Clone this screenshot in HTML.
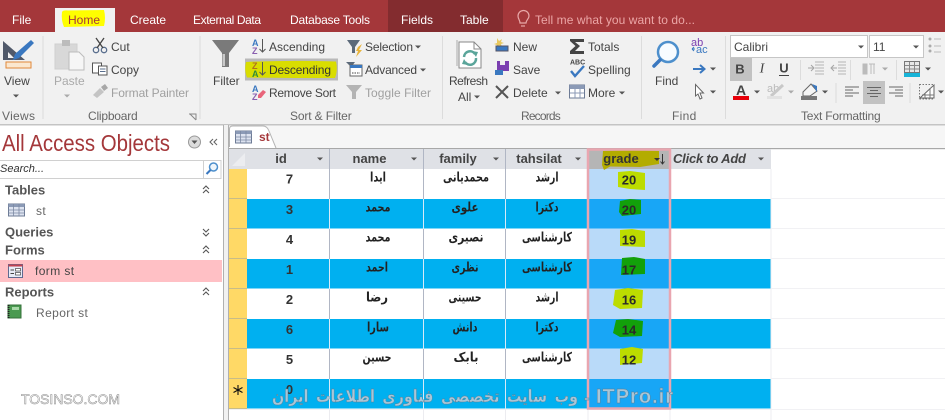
<!DOCTYPE html>
<html><head><meta charset="utf-8">
<style>
html,body{margin:0;padding:0;background:#fff;width:945px;height:420px;overflow:hidden}
svg{display:block}
text{font-family:"Liberation Sans",sans-serif;font-size:12px;fill:#444;dominant-baseline:central}
.tab{fill:#fff}
.g{fill:#aaa}
.h{font-weight:bold;font-size:13px;fill:#444}
.sec{font-weight:bold;font-size:13px;fill:#555}
.n{font-size:12px;fill:#666;letter-spacing:.4px}
.lbl{fill:#666;letter-spacing:.3px}
.d{font-weight:bold;font-size:13px;fill:#333;text-anchor:middle}
.fa{font-family:"DejaVu Sans",sans-serif;font-weight:bold;font-size:13px;fill:#222;text-anchor:middle}
.m{text-anchor:middle}
.num{font-weight:bold;font-size:13px;fill:#2a2a2a;text-anchor:middle}
</style></head><body>
<svg width="945" height="420" viewBox="0 0 945 420" xmlns="http://www.w3.org/2000/svg">
<defs>
<path id="car" d="M-3 -1.5H3L0 1.5Z" fill="#555"/>
<path id="carg" d="M-3 -1.5H3L0 1.5Z" fill="#aaa"/>
<g id="chu" fill="none" stroke="#555" stroke-width="1.1"><path d="M-3 -1L0 -4L3 -1M-3 3L0 0L3 3"/></g>
<g id="chd" fill="none" stroke="#555" stroke-width="1.1"><path d="M-3 -3L0 0L3 -3M-3 1L0 4L3 1"/></g>
<g id="tbl"><rect x="0" y="0" width="16" height="12" fill="#dde3f0" stroke="#6d7b95"/><rect x="0" y="0" width="16" height="3" fill="#8b9ab6"/><path d="M0 6H16M0 9H16M5 0V12M10.500 0V12" stroke="#7c89a3" stroke-width=".8"/></g>
</defs>

<!-- title bar -->
<rect width="945" height="32" fill="#a4373a"/>
<rect x="388" width="115" height="32" fill="#832c2f"/>
<rect x="55" y="8" width="60" height="24" fill="#f1f1f1"/>
<path d="M62 12Q63 10 68 10.500L104 10Q106 18 104 26L64 27Q61 20 62 12Z" fill="#ffff00"/>
<text class="tab" x="12" y="20">File</text>
<text x="68" y="20" style="fill:#a4373a">Home</text>
<text class="tab" x="130" y="20">Create</text>
<text class="tab" x="193" y="20" textLength="68">External Data</text>
<text class="tab" x="290" y="20" textLength="80">Database Tools</text>
<text class="tab" x="401" y="20">Fields</text>
<text class="tab" x="460" y="20">Table</text>
<g fill="none" stroke="#e8a8a8" stroke-width="1.200"><path d="M520 23C520 20 518 19 518 16A5 5 0 0 1 529 16C529 19 526 20 526 23Z"/><path d="M521 26H525"/></g>
<text x="535" y="20" textLength="160" style="fill:#eba6a6">Tell me what you want to do...</text>

<!-- ribbon -->
<rect y="32" width="945" height="92" fill="#f1f1f1"/>
<rect y="124" width="945" height="1.500" fill="#c4c4c4"/>
<g stroke="#dcdcdc"><path d="M43 36V119M200 36V119M442.500 36V119M641.500 36V119M725.500 36V119"/></g>

<!-- views -->
<path d="M3 41L25 60H3Z" fill="#50596a"/><path d="M8 52L14 58H8Z" fill="#f1f1f1"/>
<path d="M31 40L34 43L19 58L13 60L15 54Z" fill="#3a78c0"/>
<rect x="6" y="62" width="25" height="6" fill="#fbe7cf" stroke="#e0883a"/>
<text x="4" y="81">View</text><use href="#car" x="16" y="96"/>
<text class="lbl" x="2" y="116">Views</text>

<!-- clipboard -->
<rect x="55" y="44" width="22" height="25" fill="#d8d8d8" stroke="#cfcfcf"/><rect x="62" y="40" width="8" height="6" fill="#bcbcbc"/>
<path d="M69 52H79L84 57V70H69Z" fill="#f6f6f6" stroke="#bcbcbc"/>
<text class="g" x="54" y="81" style="fill:#aaa">Paste</text><use href="#carg" x="67" y="96"/>
<g fill="none" stroke="#5a6f8e" stroke-width="1.300"><circle cx="96" cy="50" r="2.700"/><circle cx="104" cy="50" r="2.700"/><path d="M97 48L104 38M103 48L96 38" stroke="#444"/></g>
<text x="111" y="47">Cut</text>
<g fill="#fff" stroke="#555"><rect x="92.500" y="63" width="9" height="10"/><path d="M98.500 66H107V75H98.500Z"/><path d="M100 69H105.500M100 71.500H105.500" stroke="#5a6f8e"/></g>
<text x="111" y="70">Copy</text>
<path d="M93 95L100 88L104 92L97 98Z" fill="#c4c4c4"/><path d="M101 87L105 84L108 88L104 91Z" fill="#a8a8a8"/>
<text x="111" y="93" textLength="78" style="fill:#a0a0a0">Format Painter</text>
<text class="lbl" x="88" y="116" textLength="50">Clipboard</text>
<path d="M189 114H196V120M190 114L196 120" fill="none" stroke="#888"/>

<!-- sort and filter -->
<path d="M212 40H239L229 53V67H222V53Z" fill="#7a7a7a"/><path d="M225 54V66H222.500V54Z" fill="#c9c9c9"/>
<text x="213" y="81">Filter</text>
<rect x="245" y="58.500" width="93" height="22" fill="#b9b9b9"/>
<path d="M246 62Q290 60 336 61.500Q338 70 335 78Q290 78 247 77.500Q244 70 246 62Z" fill="#d9dd00"/>
<g style="font-size:9px;font-weight:bold">
<text x="252" y="43" style="font-size:9px;font-weight:bold;fill:#3a78c0">A</text><text x="252" y="51" style="font-size:9px;font-weight:bold;fill:#8a5fb0">Z</text>
<text x="252" y="66" style="font-size:9px;font-weight:bold;fill:#b07020">Z</text><text x="252" y="74" style="font-size:9px;font-weight:bold;fill:#2f8a3c">A</text>
<text x="252" y="89" style="font-size:9px;font-weight:bold;fill:#3a78c0">A</text><text x="252" y="97" style="font-size:9px;font-weight:bold;fill:#8a5fb0">Z</text>
</g>
<g fill="none" stroke="#555"><path d="M262.500 39V52M259.500 49L262.500 52L265.500 49M262.500 62V75M259.500 72L262.500 75L265.500 72"/></g>
<path d="M258 95L263 90L266 92L261 98H258Z" fill="#e8647a"/>
<text x="269" y="47" textLength="56">Ascending</text>
<text x="269" y="70" textLength="62" style="fill:#333">Descending</text>
<text x="269" y="93" textLength="67">Remove Sort</text>
<path d="M347 40H360L355 47V53H352V47Z" fill="#5c6a7a"/><path d="M358 47L362 44L359 50H362L356 57L358 51H356Z" fill="#e8b43c"/>
<text x="365" y="47" textLength="48">Selection</text><use href="#car" x="418" y="47"/>
<path d="M346 62H355L352 66V70H350V66Z" fill="#5c6a7a"/><rect x="350" y="65" width="12" height="11" fill="#fff" stroke="#666"/><rect x="350" y="65" width="12" height="3" fill="#3a78c0"/><path d="M352 73H360" stroke="#444" stroke-dasharray="1.500 1"/>
<text x="365" y="70" textLength="52">Advanced</text><use href="#car" x="423" y="70"/>
<path d="M346 85H362L356 92V99H352V92Z" fill="#b4b4b4"/>
<text x="365" y="93" textLength="66" style="fill:#a0a0a0">Toggle Filter</text>
<text class="lbl" x="290" y="116" textLength="62">Sort &amp; Filter</text>

<!-- records -->
<path d="M459 42H474L481 49V68H459Z" fill="#fff" stroke="#888"/><path d="M457 40V66" stroke="#aaa"/><path d="M474 42V49H481" fill="none" stroke="#888"/>
<g fill="none" stroke="#5aa59a" stroke-width="2.500"><path d="M464 57A6 6 0 0 1 475 54"/><path d="M476 58A6 6 0 0 1 465 62"/></g>
<path d="M472 51L478 52L476 57Z M468 65L462 64L464 59Z" fill="#5aa59a"/>
<text x="449" y="81" textLength="39">Refresh</text>
<text x="458" y="97">All</text><use href="#car" x="477" y="97"/>
<path d="M497 38L499 41L502 39L501 42L504 43L501 44L502 47L499 45L497 48L497 45L494 44L497 43Z" fill="#e8c860"/>
<rect x="496" y="46" width="12" height="5" fill="#3a78c0" stroke="#556"/>
<text x="513" y="47">New</text>
<rect x="497" y="61" width="12" height="10" fill="#7a3fb0"/><rect x="500" y="61" width="5" height="4" fill="#eee"/><path d="M495 70H503V75H495Z" fill="#3a78c0"/>
<text x="513" y="70">Save</text>
<path d="M496 86L508 98M508 86L496 98" stroke="#555" stroke-width="2"/>
<text x="513" y="93">Delete</text><use href="#car" x="558" y="93"/>
<path d="M570 39H584V42H575L580 46L575 51H584V54H570V51L575.500 46L570 41Z" fill="#444"/>
<text x="588" y="47">Totals</text>
<text x="570" y="63" style="font-size:7px;font-weight:bold;fill:#444">ABC</text>
<path d="M571 71L575 76L584 66" fill="none" stroke="#3a78c0" stroke-width="2.400"/>
<text x="588" y="70">Spelling</text>
<rect x="569.500" y="85" width="15" height="13" fill="#fff" stroke="#6d7b95"/><rect x="569.500" y="85" width="15" height="4" fill="#8b9ab6"/><path d="M570 93H584M575 89V98M580 89V98" stroke="#8b9ab6"/>
<text x="588" y="93">More</text><use href="#car" x="622" y="93"/>
<text class="lbl" x="521" y="116" textLength="40">Records</text>

<!-- find -->
<circle cx="668" cy="52" r="10" fill="#f7fbff" stroke="#4d8fcc" stroke-width="2.500"/><path d="M660 60L654 66" stroke="#3a78c0" stroke-width="3.500" stroke-linecap="round"/>
<text x="655" y="81">Find</text>
<text x="691" y="43" style="font-size:11px;fill:#7a3fb0">ab</text>
<text x="696" y="50" style="font-size:11px;fill:#3a78c0">ac</text>
<path d="M692 49H695M692 49L694 47M692 49L694 51" stroke="#3a78c0" fill="none"/>
<path d="M693 69H704M700 65L704.500 69L700 73" fill="none" stroke="#3a78c0" stroke-width="2"/><use href="#car" x="713" y="69"/>
<path d="M695.500 84.500V96L698 94L700 99L702 98L700 93H703.500Z" fill="#fff" stroke="#666"/><use href="#car" x="713" y="92"/>
<text class="lbl" x="672" y="116">Find</text>

<!-- text formatting -->
<rect x="730.500" y="35.500" width="137" height="22" fill="#fff" stroke="#c6c6c6"/>
<rect x="869.500" y="35.500" width="54" height="22" fill="#fff" stroke="#c6c6c6"/>
<text x="734" y="47">Calibri</text><text x="873" y="47">11</text>
<use href="#car" x="861" y="47"/><use href="#car" x="916" y="47"/>
<g fill="#aaa"><circle cx="930" cy="39" r="1.500"/><circle cx="930" cy="46" r="1.500"/><circle cx="930" cy="51" r="1.500"/></g>
<path d="M934 39H941M934 46H941M934 52H941" stroke="#bbb"/>
<rect x="730" y="58" width="22" height="23" fill="#c2c2c2"/>
<text class="m" x="740" y="69" style="font-weight:bold;font-size:13px;text-anchor:middle">B</text>
<text class="m" x="762" y="69" style="font-style:italic;font-family:'Liberation Serif',serif;font-size:14px;text-anchor:middle">I</text>
<text class="m" x="784" y="68" style="font-weight:bold;font-size:13px;text-anchor:middle">U</text><path d="M779 75.500H789" stroke="#444"/>
<g stroke="#dcdcdc"><path d="M800.500 60V80M850.500 60V80M896.500 60V80M836 83V103M910 83V103"/></g>
<g stroke="#b5b5b5" fill="none"><path d="M815 62H824M815 65H824M815 68H824M815 71H824M815 74H824M838 62H846M838 65H846M838 68H846M838 71H846M838 74H846"/><path d="M808 68H814M811 65L814 68L811 71M837 68H831M834 65L831 68L834 71" stroke="#a5a5a5"/></g>
<path d="M863 64H867V74H863ZM869 64H875M871 64V74M874 64V74" fill="#bbb" stroke="#bbb"/><use href="#carg" x="885" y="69"/>
<rect x="904.500" y="61.500" width="15" height="11" fill="#e8e8e8" stroke="#777"/><path d="M905 65.500H919M905 69H919M909.500 62V72M914.500 62V72" stroke="#888"/>
<rect x="904" y="73" width="16" height="4" fill="#18b4d8"/><use href="#car" x="928" y="69"/>
<text x="741" y="90" style="font-size:14px;font-weight:bold;text-anchor:middle;fill:#444">A</text>
<rect x="733" y="96" width="16" height="4" fill="#e8000a"/><use href="#car" x="757" y="92"/>
<text x="767" y="89" style="font-size:11px;fill:#bbb">ab</text><path d="M771 96L783 85" stroke="#c8c8c8" stroke-width="3"/><rect x="767" y="96" width="15" height="3" fill="#e2e2e2"/><use href="#carg" x="791" y="92"/>
<path d="M803 92L811 84L817 91L810 96H803Z" fill="#f5f5f5" stroke="#666"/><path d="M812 84L817 86L817 92Z" fill="#3a78c0"/><rect x="801" y="96" width="16" height="4" fill="#777"/><use href="#car" x="825" y="92"/>
<rect x="863" y="81" width="22" height="23" fill="#c2c2c2"/>
<g stroke="#666"><path d="M845 87H859M845 90H853M845 93H859M845 96H853M867 87.500H881M870 90.500H878M867 93.500H881M870 96.500H878M889 87H903M895 90H903M889 93H903M895 96H903"/></g>
<path d="M919.500 84.500H934V99H919.500Z" fill="none" stroke="#777" stroke-dasharray="1.500 1.500"/><path d="M920 98L934 85V98Z" fill="#fff" stroke="#666"/><path d="M925 93V99M930 88V99M922 95H934" stroke="#777"/><use href="#car" x="941" y="92"/>
<text class="lbl" x="801" y="116" textLength="80">Text Formatting</text>

<!-- nav -->
<rect y="125.500" width="223" height="294.500" fill="#fff"/>
<text x="2" y="143" textLength="168" lengthAdjust="spacingAndGlyphs" style="font-size:23px;fill:#a4373a">All Access Objects</text>
<circle cx="194.500" cy="142" r="6" fill="#dcdcdc" stroke="#999"/><path d="M191.500 140.500H197.500L194.500 144Z" fill="#555"/>
<path d="M213 139L210 142L213 145M217 139L214 142L217 145" fill="none" stroke="#666" stroke-width="1.100"/>
<rect x="-1" y="160.500" width="222" height="18" fill="#fff" stroke="#d0d0d0"/>
<path d="M203.500 161V178" stroke="#d0d0d0"/>
<text x="0" y="169" style="font-size:11px;font-style:italic;fill:#333">Search...</text>
<circle cx="213.500" cy="167" r="4" fill="#eef5fb" stroke="#4d8fcc" stroke-width="1.500"/><path d="M210.500 170L206.500 174" stroke="#3a78c0" stroke-width="2"/>
<text class="sec" x="5" y="190">Tables</text><use href="#chu" x="206" y="190"/>
<use href="#tbl" x="8.500" y="204"/><text class="n" x="36" y="211">st</text>
<text class="sec" x="5" y="232">Queries</text><use href="#chd" x="206" y="232"/>
<text class="sec" x="5" y="250">Forms</text><use href="#chu" x="206" y="250"/>
<rect y="260" width="222" height="22" fill="#ffc0c5"/>
<rect x="8.500" y="264.500" width="14" height="13" fill="#e8ebf6" stroke="#606a90"/><path d="M8.500 265.500H22.500" stroke="#c04050" stroke-width="2"/><path d="M10.500 270H14M10.500 273.500H14" stroke="#444"/><rect x="15.500" y="268.500" width="5" height="2.500" fill="#fff" stroke="#444" stroke-width=".7"/><rect x="15.500" y="272.500" width="5" height="2.500" fill="#fff" stroke="#444" stroke-width=".7"/>
<text class="n" x="35" y="271" style="fill:#444">form st</text>
<text class="sec" x="5" y="292">Reports</text><use href="#chu" x="206" y="292"/>
<rect x="8" y="305" width="13" height="13" fill="#4a9a50" stroke="#34703a"/><path d="M8.500 305V318" stroke="#222" stroke-dasharray="1 1" stroke-width="2"/><rect x="12" y="307" width="7" height="3" fill="#a8d8a8"/>
<text class="n" x="36" y="313">Report st</text>
<text x="21" y="399" textLength="99" style="font-size:14px;fill:#fff;stroke:#888;stroke-width:.5px">TOSINSO.COM</text>

<!-- splitter -->
<rect x="223" y="125" width="6" height="295" fill="#f1f1f1"/>
<path d="M223.500 125V420M228.500 125V420" stroke="#b0b0b0"/>

<!-- tabs strip -->
<rect x="229" y="125.500" width="716" height="24" fill="#f6f6f6"/>
<path d="M229.500 149V129Q229.500 126 233 126H263Q267 126 269 131L276 148" fill="#fff" stroke="#b5b5b5"/>
<rect x="229" y="147" width="46" height="2" fill="#fff"/>
<use href="#tbl" x="235.500" y="131"/>
<text x="259" y="137" style="font-weight:bold;font-size:12px;fill:#a4373a">st</text>

<!-- table base -->
<rect x="229" y="149" width="716" height="271" fill="#fff"/>
<rect x="229" y="148" width="716" height="1.200" fill="#a8a8a8"/>
<rect x="229" y="149" width="542" height="20" fill="#dfe1e6"/>
<path d="M232 166L245 153V166Z" fill="#ecedf0"/>

<!-- selector -->
<rect x="229" y="169" width="18" height="240" fill="#ffd966"/>
<path d="M229 198.500H247M229 228.500H247M229 258.500H247M229 288.500H247M229 318.500H247M229 348.500H247M229 378.500H247M229 408.500H247" stroke="#c8bc88"/>

<!-- rows -->
<g fill="#00b0f0">
<rect x="247" y="199" width="524" height="29.500"/>
<rect x="247" y="259" width="524" height="29.500"/>
<rect x="247" y="319" width="524" height="29.500"/>
<rect x="247" y="379" width="524" height="29.500"/>
</g>
<path d="M771 169V420" stroke="#ececf0"/>
<g stroke="#f1f1f4"><path d="M771 198.500H945M771 228.500H945M771 258.500H945M771 288.500H945M771 318.500H945M771 348.500H945M771 378.500H945M229 409.500H945"/></g>
<g stroke="#b0b6c4"><path d="M329.500 149V199M423.500 149V199M505.500 149V199M329.500 229V259M423.500 229V259M505.500 229V259M329.500 289V319M423.500 289V319M505.500 289V319M329.500 349V379M423.500 349V379M505.500 349V379"/></g>
<g stroke="#d6eaf8"><path d="M329.500 199V229M423.500 199V229M505.500 199V229M329.500 259V289M423.500 259V289M505.500 259V289M329.500 319V349M423.500 319V349M505.500 319V349M329.500 379V409M423.500 379V409M505.500 379V409"/></g>
<path d="M329.500 409V420M423.500 409V420M505.500 409V420M588 409V420M670 409V420" stroke="#ececf0"/>

<!-- grade col -->
<rect x="589" y="169" width="81" height="240" fill="#b9daf9"/>
<g fill="#18a6f6">
<rect x="589" y="199" width="81" height="29.500"/><rect x="589" y="259" width="81" height="29.500"/><rect x="589" y="319" width="81" height="29.500"/><rect x="589" y="379" width="81" height="29.500"/>
</g>
<rect x="589" y="149" width="81" height="20" fill="#b5b5b5"/>
<path d="M603 151Q630 150 659 151L659 164L640 167L610 166.500L604 170L602 165Z" fill="#b3ac00"/>
<rect x="588" y="149.500" width="82" height="259" fill="none" stroke="#e9a6b0" stroke-width="2.500"/>
<g fill="#bcdc00">
<path d="M618 172L630 171L645 173L645 190L630 189L618 187Z"/>
<path d="M620 230L632 229L645 231L645 247L620 246Z"/>
<path d="M615 290L628 288L643 290L642 308L620 309L613 305Z"/>
<path d="M620 349L632 347L643 349L642 363L620 365Z"/>
</g>
<g fill="#12a00a">
<path d="M620 201L630 199L641 200L641 214L622 216L619 212Z"/>
<path d="M622 258L634 257L645 259L645 274L621 275Z"/>
<path d="M616 320L628 319L643 321L642 336L620 337L613 333Z"/>
</g>

<!-- header text -->
<text class="h m" x="281" y="158.500" style="text-anchor:middle">id</text>
<text class="h m" x="369.500" y="158.500" style="text-anchor:middle">name</text>
<text class="h m" x="458" y="158.500" style="text-anchor:middle">family</text>
<text class="h m" x="539" y="158.500" style="text-anchor:middle">tahsilat</text>
<text class="h m" x="621" y="158.500" style="text-anchor:middle;fill:#333">grade</text>
<text x="673" y="158.500" textLength="73" style="font-weight:bold;font-style:italic;font-size:13px;fill:#444">Click to Add</text>
<use href="#car" x="320" y="159"/><use href="#car" x="414" y="159"/><use href="#car" x="496" y="159"/><use href="#car" x="578" y="159"/><use href="#car" x="761" y="159"/>
<path d="M654 158H660L657 161Z" fill="#333"/><path d="M662.500 154V164M660.500 161.500L662.500 164L664.500 161.500" fill="none" stroke="#333"/>

<!-- data -->
<text class="d" x="289.500" y="179">7</text><text class="d" x="289.500" y="209.500">3</text><text class="d" x="289.500" y="239.500">4</text><text class="d" x="289.500" y="269.500">1</text><text class="d" x="289.500" y="299.500">2</text><text class="d" x="289.500" y="329.500">6</text><text class="d" x="289.500" y="359.500">5</text><text class="d" x="289.500" y="389.500">0</text>

<text class="fa" x="378" y="178" textLength="16" lengthAdjust="spacingAndGlyphs">ایدا</text><text class="fa" x="378" y="208" textLength="25" lengthAdjust="spacingAndGlyphs">محمد</text><text class="fa" x="378" y="238" textLength="25" lengthAdjust="spacingAndGlyphs">محمد</text><text class="fa" x="377" y="268" textLength="22" lengthAdjust="spacingAndGlyphs">احمد</text><text class="fa" x="377" y="298" textLength="22" lengthAdjust="spacingAndGlyphs">رضا</text><text class="fa" x="378" y="328" textLength="22" lengthAdjust="spacingAndGlyphs">سارا</text><text class="fa" x="377" y="358" textLength="29" lengthAdjust="spacingAndGlyphs">حسین</text>
<text class="fa" x="466" y="178" textLength="46" lengthAdjust="spacingAndGlyphs">محمدیانی</text><text class="fa" x="465" y="208" textLength="27" lengthAdjust="spacingAndGlyphs">علوی</text><text class="fa" x="466" y="238" textLength="35" lengthAdjust="spacingAndGlyphs">نصیری</text><text class="fa" x="465" y="268" textLength="27" lengthAdjust="spacingAndGlyphs">نظری</text><text class="fa" x="465" y="298" textLength="33" lengthAdjust="spacingAndGlyphs">حسینی</text><text class="fa" x="465" y="328" textLength="25" lengthAdjust="spacingAndGlyphs">دانش</text><text class="fa" x="466" y="358" textLength="25" lengthAdjust="spacingAndGlyphs">بابک</text>
<text class="fa" x="547" y="178" textLength="23" lengthAdjust="spacingAndGlyphs">ارشد</text><text class="fa" x="547" y="208" textLength="23" lengthAdjust="spacingAndGlyphs">دکترا</text><text class="fa" x="547" y="238" textLength="50" lengthAdjust="spacingAndGlyphs">کارشناسی</text><text class="fa" x="547" y="268" textLength="50" lengthAdjust="spacingAndGlyphs">کارشناسی</text><text class="fa" x="547" y="298" textLength="23" lengthAdjust="spacingAndGlyphs">ارشد</text><text class="fa" x="547" y="328" textLength="23" lengthAdjust="spacingAndGlyphs">دکترا</text><text class="fa" x="547" y="358" textLength="50" lengthAdjust="spacingAndGlyphs">کارشناسی</text>

<text class="num" x="629" y="180">20</text><text class="num" x="629" y="210">20</text><text class="num" x="629" y="240">19</text><text class="num" x="629" y="270">17</text><text class="num" x="629" y="300">16</text><text class="num" x="629" y="330">14</text><text class="num" x="629" y="360">12</text>

<path d="M238 385V395M233.500 387.500L242.500 392.500M233.500 392.500L242.500 387.500" stroke="#111" stroke-width="1.100"/>

<!-- watermark -->
<text x="425" y="397" textLength="306" lengthAdjust="spacingAndGlyphs" style="font-family:'DejaVu Sans',sans-serif;font-size:17px;font-weight:bold;word-spacing:3px;fill:#a9c6d8;stroke:#5a7c90;stroke-width:.4px;text-anchor:middle">وب سایت تخصصی فناوری اطلاعات ایران</text>
<text x="584" y="398" style="font-size:17px;font-weight:bold;fill:#a9c6d8;stroke:#5a7c90;stroke-width:.4px">-</text>
<text x="596" y="397" textLength="77" style="font-size:20px;font-weight:bold;fill:#a9c6d8;stroke:#5a7c90;stroke-width:.4px">ITPro.ir</text>
</svg>
</body></html>
